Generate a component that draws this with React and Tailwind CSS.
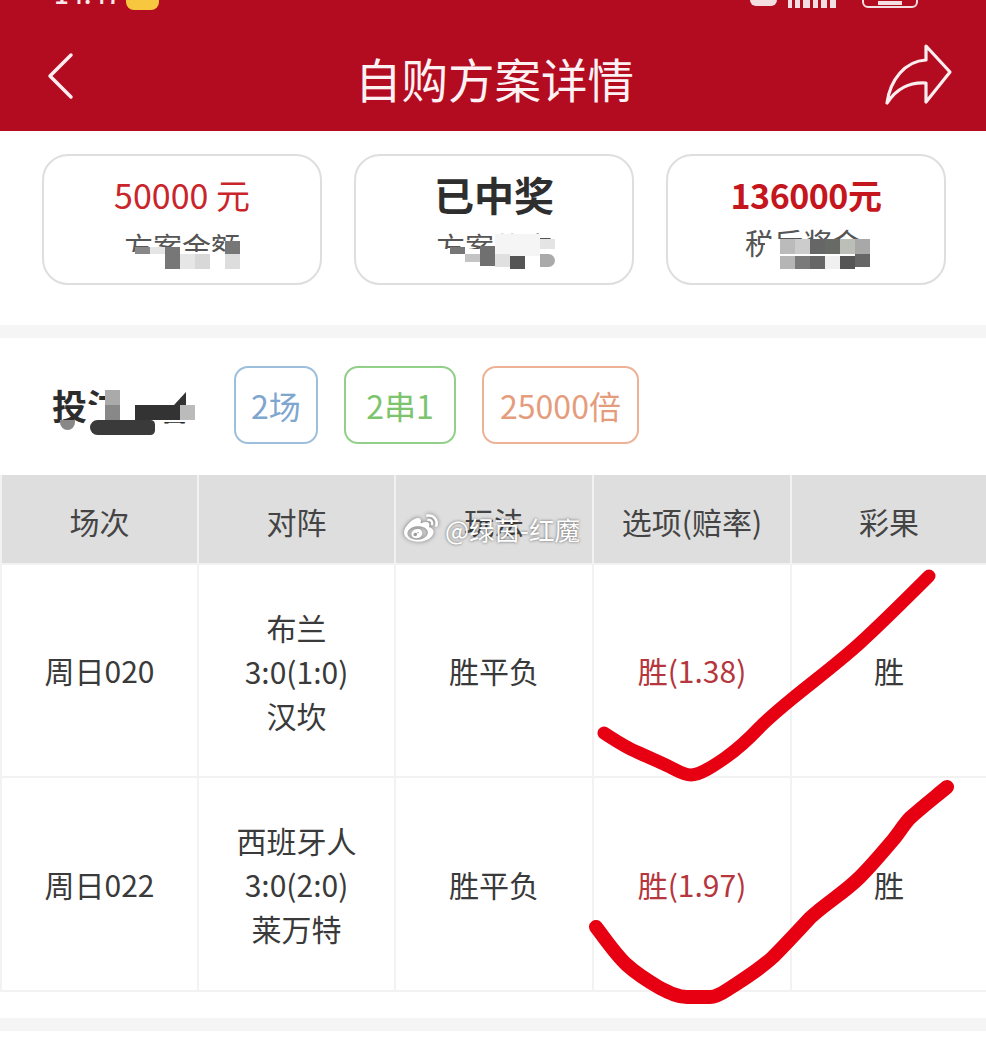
import React from 'react';
import { FaWeibo } from 'react-icons/fa';

const cjk = { fontFamily: '"Noto Sans CJK SC", "Noto Sans", sans-serif' };

// censored patches, positions are [left, top, width, height] inside the parent
const Blocks = ({ items }) =>
  items.map(([left, top, width, height, cls], i) => (
    <div key={i} className={`absolute ${cls}`} style={{ left, top, width, height }} />
  ));

const SummaryCard = ({ children, label, labelClass = 'mt-[7px]', patches }) => (
  <div className="relative flex h-[131px] w-[280px] flex-col items-center rounded-[26px] border-2 border-[#dedede] bg-white pt-[13px]">
    <div className="flex h-[50px] items-center">{children}</div>
    <div className={`text-[29px] leading-[40px] text-[#555] ${labelClass}`}>{label}</div>
    <Blocks items={patches} />
  </div>
);

const Tag = ({ className, children }) => (
  <div className={`flex h-[78px] items-center justify-center rounded-[14px] border-2 bg-white text-[32px] ${className}`}>
    {children}
  </div>
);

const rows = [
  { no: '周日020', match: ['布兰', '3:0(1:0)', '汉坎'], pick: '胜(1.38)', h: 'h-[211px]' },
  { no: '周日022', match: ['西班牙人', '3:0(2:0)', '莱万特'], pick: '胜(1.97)', h: 'h-[212px]' },
];

const headers = ['场次', '对阵', '玩法', '选项(赔率)', '彩果'];

const card1Patches = [
  [80, 96, 120, 20, 'bg-white'],
  [91, 91, 15, 7, 'bg-[#888]'],
  [106, 91, 15, 7, 'bg-[#e5e5e5]'],
  [121, 91, 15, 22, 'bg-[#777]'],
  [136, 98, 15, 15, 'bg-[#e6e6e6]'],
  [151, 98, 15, 15, 'bg-[#d8d8d8]'],
  [181, 85, 15, 13, 'bg-[#777]'],
  [181, 98, 15, 15, 'bg-[#ddd]'],
];

const card2Patches = [
  [78, 93, 122, 22, 'bg-white'],
  [139, 78, 45, 22, 'bg-[#f5f5f5]'],
  [94, 91, 15, 7, 'bg-[#777]'],
  [109, 98, 15, 8, 'bg-[#c4c4c4]'],
  [124, 90, 15, 20, 'bg-[#707070]'],
  [139, 98, 15, 13, 'bg-[#e0e0e0]'],
  [154, 100, 15, 13, 'bg-[#555]'],
  [184, 83, 15, 10, 'bg-[#e4e4e4]'],
  [184, 98, 15, 13, 'rounded-r-[8px] bg-[#aaa]'],
];

const card3Patches = [
  [97, 83, 105, 30, 'bg-white'],
  [112, 83, 15, 15, 'bg-[#bbb]'],
  [127, 83, 15, 15, 'bg-[#ccc]'],
  [142, 83, 15, 15, 'bg-[#666]'],
  [157, 83, 15, 15, 'bg-[#686a66]'],
  [172, 83, 15, 15, 'bg-[#bcbeb8]'],
  [187, 83, 15, 15, 'bg-[#a8a8a8]'],
  [112, 100, 15, 13, 'bg-[#b5b5b5]'],
  [127, 100, 15, 13, 'bg-[#7a7a7a]'],
  [142, 100, 15, 13, 'bg-[#666]'],
  [157, 100, 15, 13, 'bg-[#f0f0f0]'],
  [172, 100, 15, 13, 'bg-[#555]'],
  [187, 98, 15, 13, 'bg-[#666]'],
];

const titlePatches = [
  [53, 18, 90, 38, 'bg-white'],
  [36, 39, 20, 24, 'bg-white'],
  [53, 24, 15, 15, 'bg-[#aaa]'],
  [53, 39, 15, 15, 'bg-[#888]'],
  [8, 54, 15, 10, 'rounded-b-[8px] bg-[#888]'],
  [38, 54, 65, 15, 'rounded-l-[10px] rounded-r-[6px] bg-[#3a3a3a]'],
  [83, 39, 45, 15, 'bg-[#333]'],
  [128, 39, 15, 15, 'bg-[#bbb]'],
  [122, 26, 12, 13, '[clip-path:polygon(100%_0,100%_100%,0_100%)] bg-[#333]'],
];

const App = () => {
  return (
    <div className="relative h-[1055px] w-[986px] overflow-hidden bg-white text-[#3a3a3a]" style={cjk}>
      {/* header */}
      <div className="h-[131px] bg-[#b30c20] text-white">
        <div className="relative h-[10px] overflow-hidden">
          <div className="absolute left-[54px] top-[-24px] text-[26px] font-medium leading-[34px] text-[#fbe6e9]">14:47</div>
          <div className="absolute left-[126px] top-[-20px] h-[30px] w-[33px] rounded-[8px] bg-[#f7c83f]" />
          <div className="absolute left-[750px] top-[-14px] h-[20px] w-[27px] rounded-[6px] bg-[#f3dfe2]" />
          <div className="absolute left-[788px] top-[-12px] flex h-[20px] items-end gap-[3px]">
            <div className="h-[18px] w-[4px] bg-[#f3dfe2]" />
            <div className="h-[18px] w-[5px] bg-[#f3dfe2]" />
            <div className="h-[14px] w-[7px] bg-[#f3dfe2]" />
            <div className="h-[18px] w-[5px] bg-[#f3dfe2]" />
            <div className="h-[18px] w-[6px] bg-[#f3dfe2]" />
            <div className="h-[18px] w-[6px] bg-[#f3dfe2]" />
          </div>
          <div className="absolute left-[862px] top-[-20px] flex h-[28px] w-[56px] items-end justify-center rounded-[6px] border-2 border-[#f3dfe2] pb-[1px]">
            <div className="h-[4px] w-[24px] bg-[#f3dfe2]" />
          </div>
        </div>
        <div className="flex h-[121px] items-center justify-between pl-[46px] pr-[33px] pt-[15px]">
          <svg width="28" height="48" viewBox="0 0 28 48" fill="none" stroke="#fbeef0" strokeWidth="3.5" strokeLinecap="round" strokeLinejoin="round" className="mt-[-4px]">
            <path d="M25 3 L4 24 L25 45" />
          </svg>
          <div className="ml-[30px] text-[46.5px] leading-[60px] text-[#fdf1f3]">自购方案详情</div>
          <svg width="68" height="62" viewBox="0 0 68 62" fill="none" stroke="#fbeef0" strokeWidth="3.2" strokeLinejoin="round" strokeLinecap="round" className="mt-[-6px]">
            <path d="M2 59 C5 36 20 17 41 16 L41 2 L65 28 L41 58 L41 39 C24 38 12 44 2 59 Z" />
          </svg>
        </div>
      </div>

      {/* summary cards */}
      <div className="flex h-[194px] items-start gap-[32px] pl-[42px] pt-[23px]">
        <SummaryCard label="方案金额" patches={card1Patches}>
          <span className="text-[34px] text-[#c9252b]">50000 元</span>
        </SummaryCard>
        <SummaryCard label="方案状态" patches={card2Patches}>
          <span className="text-[40px] font-bold text-[#2e2e2e]">已中奖</span>
        </SummaryCard>
        <SummaryCard label="税后奖金" labelClass="mt-[3px] mr-[6px]" patches={card3Patches}>
          <span className="text-[34px] font-bold tracking-[-0.5px] text-[#c4161c]">136000元</span>
        </SummaryCard>
      </div>

      <div className="h-[13px] bg-[#f5f5f5]" />

      {/* bet info */}
      <div className="flex h-[137px] items-start pl-[52px] pt-[28px]">
        <div className="relative h-[78px] w-[182px]">
          <div className="text-[35px] font-bold leading-[78px] text-[#2c2c2c]">投注内容</div>
          <Blocks items={titlePatches} />
        </div>
        <div className="flex gap-[26px]">
          <Tag className="w-[84px] border-[#9dbfdc] text-[#7ea6cf]">2场</Tag>
          <Tag className="w-[112px] border-[#92cf88] text-[#7cc46e]">2串1</Tag>
          <Tag className="w-[157px] border-[#edb296] text-[#e59c7c]">25000倍</Tag>
        </div>
      </div>

      {/* table */}
      <div className="grid grid-cols-[195px_195px_196px_196px_194px] gap-[2px] border-b-2 border-[#f2f2f2] bg-[#f2f2f2] pl-[2px] text-[30px]">
        {headers.map((h) => (
          <div key={h} className="flex h-[88px] items-center justify-center bg-[#dedede] pt-[4px] text-[#444]">
            {h}
          </div>
        ))}
        {rows.map((r) => (
          <React.Fragment key={r.no}>
            <div className={`flex ${r.h} items-center justify-center bg-white`}>{r.no}</div>
            <div className={`flex ${r.h} flex-col items-center justify-center bg-white leading-[44px]`}>
              {r.match.map((m) => (
                <div key={m}>{m}</div>
              ))}
            </div>
            <div className={`flex ${r.h} items-center justify-center bg-white`}>胜平负</div>
            <div className={`flex ${r.h} items-center justify-center bg-white text-[#b5363c]`}>{r.pick}</div>
            <div className={`flex ${r.h} items-center justify-center bg-white`}>胜</div>
          </React.Fragment>
        ))}
      </div>

      <div className="mt-[26px] h-[13px] bg-[#f5f5f5]" />

      {/* hand drawn checks over the table */}
      <svg className="absolute left-0 top-0" width="986" height="1055" fill="none" stroke="#e60012" strokeLinecap="round" strokeLinejoin="round">
        <path strokeWidth="13" d="M604 733 C615 740 625 747 637 752 C650 758 660 762 670 767 C678 771 684 775 691 775 C700 775 712 767 725 758 C735 751 745 743 760 727 C770 717 782 707 793 698 C815 680 838 663 860 643 C884 621 905 600 929 576" />
        <path strokeWidth="14" d="M596 927 C606 940 616 955 627 965 C638 975 648 981 660 988 C670 993 678 997 687 997 L710 997 C716 997 721 994 727 990 C742 980 758 971 773 957 C785 945 798 931 810 918 C826 903 844 893 860 877 C872 865 882 853 893 840 C899 833 904 824 910 818 C922 807 935 797 947 787" />
      </svg>

      {/* watermark */}
      <div className="absolute left-[402px] top-[512px] flex items-center gap-[5px] text-white [text-shadow:0_0_3px_rgba(0,0,0,0.6)]">
        <FaWeibo className="h-[34px] w-[38px] drop-shadow-[0_0_2px_rgba(0,0,0,0.5)]" />
        <span className="text-[25.5px] leading-[34px]">@绿茵-红魔</span>
      </div>
    </div>
  );
};

export default App;
